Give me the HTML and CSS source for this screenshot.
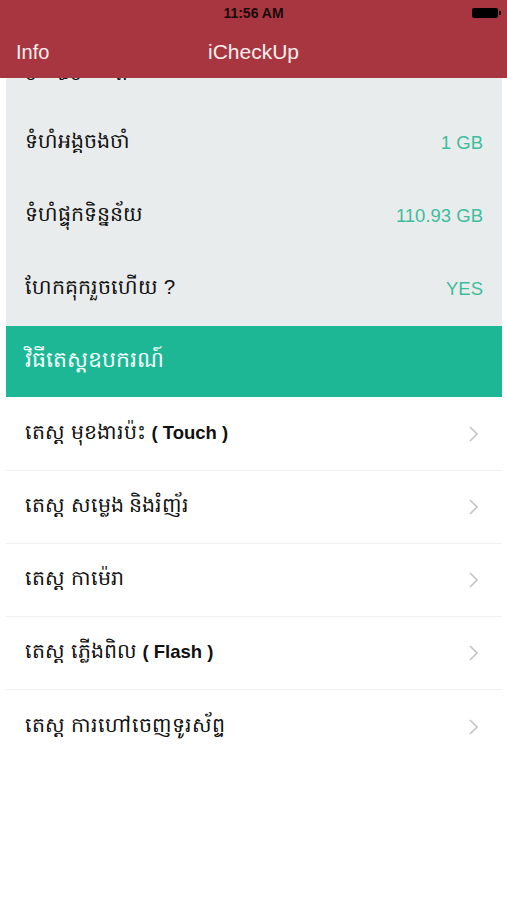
FILE: index.html
```html
<!DOCTYPE html>
<html lang="km">
  <head>
    <meta charset="UTF-8" />
    <meta name="viewport" content="width=device-width, initial-scale=1.0" />
    <title>iCheckUp</title>
    <link rel="stylesheet" href="styles.css">
  </head>
  <body>
    <div class="topbar">
      <div class="status">
        <span class="time">11:56 AM</span>
        <span class="battery"></span>
      </div>
      <div class="nav">
        <span class="nav-left">Info</span>
        <span class="nav-title">iCheckUp</span>
      </div>
    </div>

    <div class="info">
      <div class="info-inner">
        <div class="info-row">
          <span class="label">ប្រព័ន្ធប្រតិបត្តិការ</span>
          <span class="value"></span>
        </div>
        <div class="info-row">
          <span class="label">ទំហំអង្គចងចាំ</span>
          <span class="value">1 GB</span>
        </div>
        <div class="info-row">
          <span class="label">ទំហំផ្ទុកទិន្នន័យ</span>
          <span class="value">110.93 GB</span>
        </div>
        <div class="info-row">
          <span class="label">ហែកគុករួចហើយ ?</span>
          <span class="value">YES</span>
        </div>
      </div>
    </div>

    <div class="section">វិធីតេស្តឧបករណ៍</div>

    <div class="tests">
      <div class="test-row">
        <span class="label">តេស្ត មុខងារប៉ះ <b>( Touch )</b></span>
        <svg class="chev" width="9" height="16" viewBox="0 0 9 16"><path d="M1 1l7 7-7 7" fill="none" stroke="#c4c4c8" stroke-width="1.6"/></svg>
      </div>
      <div class="test-row">
        <span class="label">តេស្ត សម្លេង និងរំញ័រ</span>
        <svg class="chev" width="9" height="16" viewBox="0 0 9 16"><path d="M1 1l7 7-7 7" fill="none" stroke="#c4c4c8" stroke-width="1.6"/></svg>
      </div>
      <div class="test-row">
        <span class="label">តេស្ត កាម៉េរា</span>
        <svg class="chev" width="9" height="16" viewBox="0 0 9 16"><path d="M1 1l7 7-7 7" fill="none" stroke="#c4c4c8" stroke-width="1.6"/></svg>
      </div>
      <div class="test-row">
        <span class="label">តេស្ត ភ្លើងពិល <b>( Flash )</b></span>
        <svg class="chev" width="9" height="16" viewBox="0 0 9 16"><path d="M1 1l7 7-7 7" fill="none" stroke="#c4c4c8" stroke-width="1.6"/></svg>
      </div>
      <div class="test-row last">
        <span class="label">តេស្ត ការហៅចេញទូរស័ព្ទ</span>
        <svg class="chev" width="9" height="16" viewBox="0 0 9 16"><path d="M1 1l7 7-7 7" fill="none" stroke="#c4c4c8" stroke-width="1.6"/></svg>
      </div>
    </div>
  </body>
</html>
```

FILE: styles.css
```css
body {
  margin: 0;
  background: #ffffff;
  font-family: "Liberation Sans", "Noto Sans", sans-serif;
  color: #111;
}

.topbar {
  background: #a83640;
  color: #fbeeee;
  height: 78px;
}

.status {
  height: 26px;
  display: flex;
  justify-content: center;
  align-items: center;
  position: relative;
}

.time {
  font-size: 14px;
  font-weight: bold;
  color: #1a0a0a;
}

.battery {
  position: absolute;
  right: 9px;
  top: 8px;
  width: 26px;
  height: 10px;
  background: #000;
  border-radius: 2px;
}

.battery::after {
  content: "";
  position: absolute;
  right: -3px;
  top: 3px;
  width: 2px;
  height: 4px;
  background: #000;
}

.nav {
  height: 52px;
  display: flex;
  align-items: center;
  justify-content: center;
  position: relative;
  font-size: 21px;
}

.nav-left {
  position: absolute;
  left: 16px;
  font-size: 20px;
}

.info {
  margin: 0 5px 0 6px;
  background: #e9ecec;
  height: 248px;
  overflow: hidden;
}

.info-inner {
  margin-top: -45px;
}

.info-row,
.test-row {
  height: 73px;
  display: flex;
  align-items: center;
  justify-content: space-between;
  padding: 0 19px 0 19px;
  box-sizing: border-box;
}

.label {
  font-size: 20.5px;
}

.label b {
  font-size: 18.5px;
}

.value {
  color: #3dbd9c;
  font-size: 18.5px;
}

.section {
  margin: 0 5px 0 6px;
  background: #1db795;
  color: #f2fffb;
  height: 71px;
  display: flex;
  align-items: center;
  padding-left: 19px;
  font-size: 22px;
}

.tests {
  margin: 1px 5px 0 6px;
}

.test-row {
  border-bottom: 1px solid #f1f1f1;
  padding-right: 24px;
}

.test-row.last {
  border-bottom: none;
}
```
